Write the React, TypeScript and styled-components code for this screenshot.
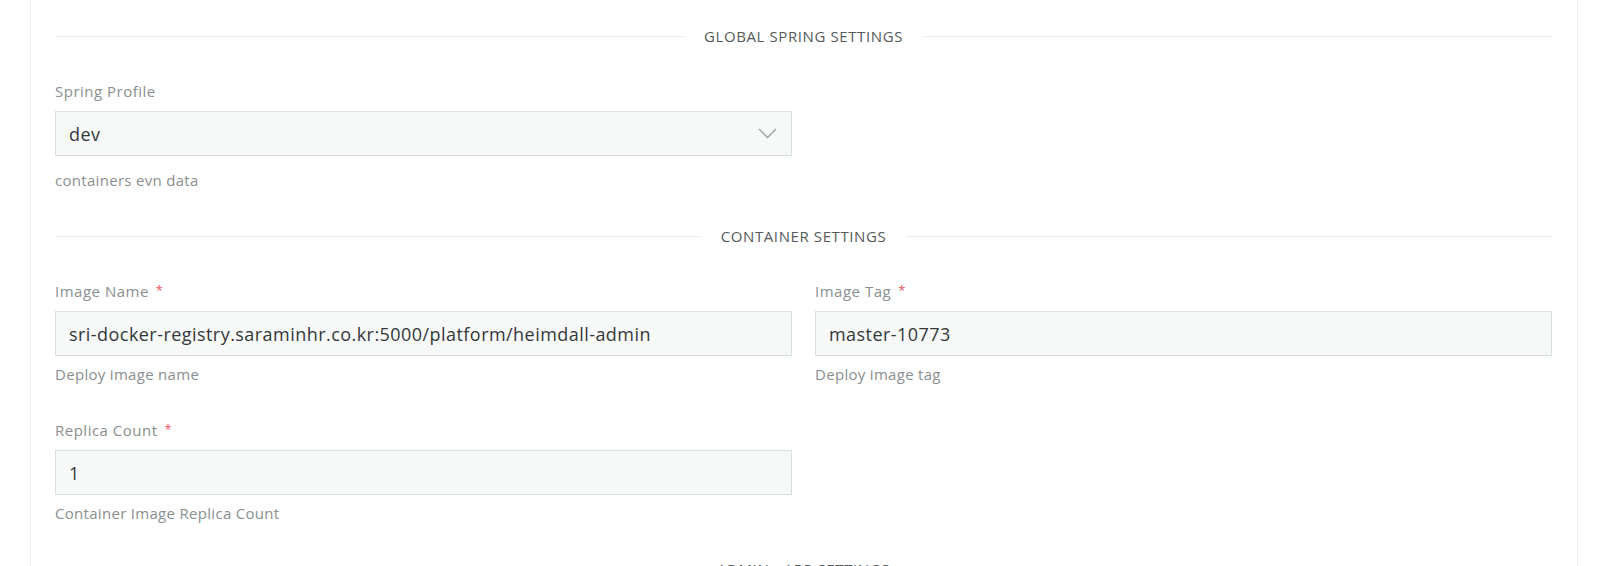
import React from "react";
import styled, { createGlobalStyle } from "styled-components";

const Global = createGlobalStyle`
  html, body { margin: 0; padding: 0; background: #ffffff; overflow: hidden; }
  body { font-family: "Open Sans", "Liberation Sans", sans-serif; }
  * { box-sizing: border-box; }
`;

const Page = styled.div`
  padding-left: 30px;
  height: 566px;
  overflow: hidden;
`;

const Card = styled.div`
  width: 1548px;
  border: 1px solid #eceeee;
  border-top: none;
  background: #fff;
  padding: 25px 25px 0 24px;
  min-height: 700px;
`;

const Divider = styled.div`
  display: flex;
  align-items: center;
  gap: 20px;
  margin-bottom: 33px;
  &::before, &::after {
    content: "";
    flex: 1;
    height: 1px;
    background: #e6eaea;
  }
`;

const DividerText = styled.span`
  font-size: 15px;
  line-height: 22px;
  color: #555a5a;
  letter-spacing: 0.6px;
  text-transform: uppercase;
`;

const Grid = styled.div`
  display: grid;
  grid-template-columns: 1fr 1fr;
  column-gap: 23px;
`;

const Item = styled.div`
  margin-bottom: 34px;
`;

const Label = styled.div`
  font-size: 15px;
  line-height: 22px;
  height: 22px;
  letter-spacing: 0.5px;
  color: #8a8f8f;
  margin-bottom: 9px;
`;

const Required = styled.span`
  color: #f2545b;
  margin-left: 7px;
  font-size: 13px;
  line-height: 1;
  vertical-align: 2px;
`;

const Box = styled.div`
  height: 45px;
  border: 1px solid #d9e0e0;
  background: #f7f9f9;
  display: flex;
  align-items: center;
  justify-content: space-between;
  padding: 0 14px 0 13px;
  font-size: 18px;
  letter-spacing: 0.45px;
  color: #343838;
`;

const Help = styled.div<{ $gap: number }>`
  margin-top: ${(p) => p.$gap}px;
  font-size: 15px;
  line-height: 22px;
  letter-spacing: 0.3px;
  color: #8a8f8f;
`;

const Chevron = () => (
  <svg width="19" height="11" viewBox="0 0 19 11" fill="none">
    <path d="M1 1 L9.5 9.5 L18 1" stroke="#9aa0a0" strokeWidth="1.3" />
  </svg>
);

type FieldProps = {
  label: string;
  value: string;
  help: string;
  required?: boolean;
  select?: boolean;
};

const Field = ({ label, value, help, required, select }: FieldProps) => (
  <Item>
    <Label>
      {label}
      {required && <Required>*</Required>}
    </Label>
    <Box>
      <span>{value}</span>
      {select && <Chevron />}
    </Box>
    <Help $gap={select ? 13 : 7}>{help}</Help>
  </Item>
);

const Section = ({ title, children }: { title: string; children?: React.ReactNode }) => (
  <>
    <Divider>
      <DividerText>{title}</DividerText>
    </Divider>
    {children}
  </>
);

export default function App() {
  return (
    <>
      <Global />
      <Page>
        <Card>
          <Section title="Global Spring Settings">
            <Grid>
              <Field label="Spring Profile" value="dev" help="containers evn data" select />
            </Grid>
          </Section>
          <Section title="Container Settings">
            <Grid>
              <Field
                label="Image Name"
                required
                value="sri-docker-registry.saraminhr.co.kr:5000/platform/heimdall-admin"
                help="Deploy image name"
              />
              <Field label="Image Tag" required value="master-10773" help="Deploy image tag" />
              <Field label="Replica Count" required value="1" help="Container Image Replica Count" />
            </Grid>
          </Section>
          <Section title="Admin - App Settings" />
        </Card>
      </Page>
    </>
  );
}
